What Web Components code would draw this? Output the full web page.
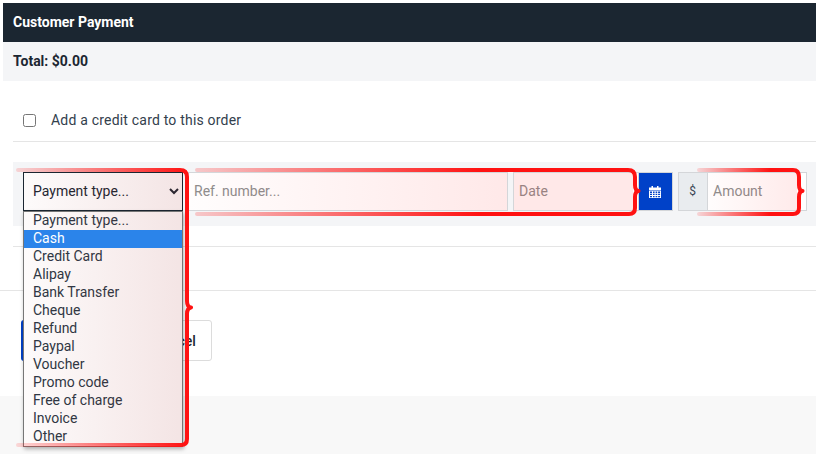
<!DOCTYPE html>
<html>
<head>
<meta charset="utf-8">
<style>
    html, body { margin: 0; background: #fff; }
    body { width: 816px; height: 454px; overflow: hidden; position: relative; font: 14px Roboto, sans-serif; color: #1b2631; }
</style>
</head>
<body>
<payment-page></payment-page>
<annotation-marks></annotation-marks>

<script>
class PaymentHeader extends HTMLElement {
    constructor() {
        super();
        this.attachShadow({ mode: 'open' });
        this.shadowRoot.innerHTML = `
            <style>
                :host { display: block; margin: 3px 0 0 3px; }
                .title, .total {
                    height: 37px;
                    padding: 0 0 2px 10px;
                    display: flex;
                    align-items: center;
                    font-size: 14px;
                    font-weight: 700;
                }
                .title { background: #1b2631; color: #fff; }
                .total { background: #f4f5f7; color: #1b2631; }
            </style>
            <div class="title">Customer Payment</div>
            <div class="total">Total: $0.00</div>
        `;
    }
}

class CardOption extends HTMLElement {
    constructor() {
        super();
        this.attachShadow({ mode: 'open' });
        this.shadowRoot.innerHTML = `
            <style>
                :host {
                    display: flex;
                    align-items: center;
                    height: 42px;
                    margin-left: 13px;
                    padding: 18px 0 0 10px;
                    border-bottom: 1px solid #e5e5e5;
                }
                input { width: 13px; height: 13px; margin: 0 15px 0 0; }
                label { font-size: 14px; letter-spacing: .2px; color: #33404d; }
            </style>
            <input type="checkbox" id="c"><label for="c"><slot></slot></label>
        `;
    }
}

class PaymentTypeList extends HTMLElement {
    constructor() {
        super();
        this.attachShadow({ mode: 'open' });
        const items = ['Payment type...', 'Cash', 'Credit Card', 'Alipay', 'Bank Transfer', 'Cheque', 'Refund',
            'Paypal', 'Voucher', 'Promo code', 'Free of charge', 'Invoice', 'Other'];
        this.shadowRoot.innerHTML = `
            <style>
                :host {
                    display: block;
                    position: absolute;
                    left: 10px;
                    top: 49px;
                    width: 160px;
                    box-sizing: border-box;
                    border: 1px solid #767676;
                    background: #fff;
                    box-shadow: 1px 2px 4px rgba(0,0,0,.3);
                    z-index: 5;
                }
                div { height: 18px; line-height: 16px; padding-left: 9px; font-size: 14px; color: #2b3744; }
                div.on { background: #2b84ea; color: #fff; }
            </style>
            ${items.map(i => `<div class="${i === 'Cash' ? 'on' : ''}">${i}</div>`).join('')}
        `;
    }
}

class PaymentRow extends HTMLElement {
    constructor() {
        super();
        this.attachShadow({ mode: 'open' });
        this.shadowRoot.innerHTML = `
            <style>
                :host {
                    display: flex;
                    position: relative;
                    margin: 20px 0 0 13px;
                    padding: 10px 9px 15px 10px;
                    height: 39px;
                    background: #f4f5f7;
                    font-size: 14px;
                }
                select {
                    width: 160px;
                    height: 39px;
                    box-sizing: border-box;
                    padding: 0 0 2px 5px;
                    margin-right: 5px;
                    border: 1px solid #1b2631;
                    border-radius: 0;
                    background: #fff;
                    color: #1b2631;
                    font: 14px Roboto, sans-serif;
                    outline: none;
                }
                input {
                    height: 39px;
                    box-sizing: border-box;
                    border: 1px solid #d4d6d9;
                    border-radius: 0;
                    background: #fff;
                    padding: 0 5px 2px;
                    font: 14px Roboto, sans-serif;
                    outline: none;
                }
                input::placeholder { color: #8d8d8d; opacity: 1; }
                .ref { width: 320px; margin-right: 5px; }
                .date { width: 125px; border-right: 0; }
                .cal {
                    width: 35px;
                    height: 39px;
                    padding-right: 2px;
                    display: flex;
                    align-items: center;
                    justify-content: center;
                    background: #0041c8;
                    border: 1px solid #d4d6d9;
                    box-sizing: border-box;
                    margin-right: 5px;
                }
                .cur {
                    width: 29px;
                    height: 39px;
                    box-sizing: border-box;
                    padding: 0 1px 2px 0;
                    display: flex;
                    align-items: center;
                    justify-content: center;
                    background: #e9ecef;
                    border: 1px solid #d4d6d9;
                    border-right: 0;
                    font-size: 12px;
                    color: #3a4654;
                }
                .amt { flex: 1; min-width: 0; }
            </style>
            <select><option>Payment type...</option></select>
            <input class="ref" placeholder="Ref. number...">
            <input class="date" placeholder="Date">
            <div class="cal">
                <svg width="12" height="12" viewBox="0 0 12 12" fill="#fff">
                    <rect x="2.5" y="0" width="1.5" height="2.5"/><rect x="8" y="0" width="1.5" height="2.5"/>
                    <path d="M0 1.5h12V4H0z"/>
                    <path fill-rule="evenodd" d="M0 4.500h12V12H0zM1 5.500v1.400h2V5.500zM4 5.500v1.400h1.600V5.500zM6.600 5.500v1.400h1.600V5.500zM9.100 5.500v1.400h2V5.500zM1 7.800v1.300h2V7.800zM4 7.800v1.300h1.600V7.800zM6.600 7.800v1.300h1.600V7.800zM9.100 7.800v1.300h2V7.800zM1 10v1.200h2V10zM4 10v1.200h1.600V10zM6.600 10v1.200h1.600V10zM9.100 10v1.200h2V10z"/>
                </svg>
            </div>
            <div class="cur">$</div>
            <input class="amt" placeholder="Amount">
            <payment-type-list></payment-type-list>
        `;
    }
}

class FormActions extends HTMLElement {
    constructor() {
        super();
        this.attachShadow({ mode: 'open' });
        this.shadowRoot.innerHTML = `
            <style>
                :host { display: block; }
                .rule1 { height: 1px; background: #e5e5e5; margin: 20px 0 0 13px; }
                .rule2 { height: 1px; background: #e5e5e5; margin-top: 43px; }
                .btns { display: flex; gap: 12px; padding: 29px 0 0 21px; height: 41px; }
                .btn { height: 41px; box-sizing: border-box; border-radius: 3px; font: 500 14px Roboto, sans-serif; display: flex; align-items: center; justify-content: center; }
                .save { width: 104px; background: #0041c8; }
                .cancel { width: 75px; border: 1px solid #dcdcdc; color: #1b2631; background: #fff; }
                .foot { height: 58px; margin-top: 35px; background: #f8f8f8; }
            </style>
            <div class="rule1"></div>
            <div class="rule2"></div>
            <div class="btns">
                <div class="btn save"></div>
                <div class="btn cancel">Cancel</div>
            </div>
            <div class="foot"></div>
        `;
    }
}

class PaymentPage extends HTMLElement {
    constructor() {
        super();
        this.attachShadow({ mode: 'open' });
        this.shadowRoot.innerHTML = `
            <style>
                :host { display: block; }
            </style>
            <payment-header></payment-header>
            <card-option>Add a credit card to this order</card-option>
            <payment-row></payment-row>
            <form-actions></form-actions>
        `;
    }
}

// red hand drawn marks that sit over the form
class AnnotationMarks extends HTMLElement {
    constructor() {
        super();
        this.attachShadow({ mode: 'open' });
        this.shadowRoot.innerHTML = `
            <style>
                :host { display: block; position: absolute; left: 0; top: 0; width: 816px; height: 454px; pointer-events: none; z-index: 10; }
                svg { display: block; }
            </style>
            <svg width="816" height="454" viewBox="0 0 816 454" fill="none">
                <defs>
                    <linearGradient id="s1" gradientUnits="userSpaceOnUse" x1="17" y1="0" x2="187" y2="0">
                        <stop offset="0" stop-color="#ff1212" stop-opacity=".15"/><stop offset="1" stop-color="#ff1212"/>
                    </linearGradient>
                    <linearGradient id="f1" gradientUnits="userSpaceOnUse" x1="23" y1="0" x2="183" y2="0">
                        <stop offset="0" stop-color="#a83232" stop-opacity=".02"/><stop offset="1" stop-color="#a83232" stop-opacity=".13"/>
                    </linearGradient>
                    <linearGradient id="s2" gradientUnits="userSpaceOnUse" x1="195" y1="0" x2="480" y2="0">
                        <stop offset="0" stop-color="#ff1212" stop-opacity=".2"/><stop offset="1" stop-color="#ff1212"/>
                    </linearGradient>
                    <linearGradient id="f2" gradientUnits="userSpaceOnUse" x1="190" y1="0" x2="510" y2="0">
                        <stop offset="0" stop-color="#ff3030" stop-opacity=".01"/><stop offset="1" stop-color="#ff3030" stop-opacity=".11"/>
                    </linearGradient>
                    <linearGradient id="s3" gradientUnits="userSpaceOnUse" x1="698" y1="0" x2="770" y2="0">
                        <stop offset="0" stop-color="#ff1212" stop-opacity=".15"/><stop offset="1" stop-color="#ff1212"/>
                    </linearGradient>
                    <linearGradient id="f3" gradientUnits="userSpaceOnUse" x1="707" y1="0" x2="797" y2="0">
                        <stop offset="0" stop-color="#ff3030" stop-opacity=".01"/><stop offset="1" stop-color="#ff3030" stop-opacity=".1"/>
                    </linearGradient>
                </defs>
                <rect x="24" y="173" width="158" height="37" fill="url(#f1)"/>
                <rect x="24" y="212" width="158" height="18" fill="url(#f1)"/>
                <rect x="24" y="248" width="158" height="197" fill="url(#f1)"/>
                <rect x="189" y="173" width="318" height="37" fill="url(#f2)"/>
                <rect x="514" y="173" width="119" height="37" fill="#ff3030" fill-opacity=".11"/>
                <rect x="708" y="173" width="89" height="37" fill="url(#f3)"/>
                <g stroke-width="4" stroke-linejoin="round" stroke-linecap="round">
                    <path stroke="url(#s1)" d="M18 170H180q7 0 7 7V301q0 6 4 6.500q-4 .5-4 6.500V439q0 6-6 6H18"/>
                    <path stroke="url(#s2)" d="M197 170H628q7 0 7 7V185q0 5.500 3.500 6q-3.500 .5-3.500 6v11q0 6-6 6H197"/>
                    <path stroke="url(#s3)" d="M699 170H793q6 0 6 7V185q0 5.500 3.500 6q-3.500 .5-3.500 6v11q0 6-6 6H699"/>
                </g>
            </svg>
        `;
    }
}

customElements.define('payment-header', PaymentHeader);
customElements.define('card-option', CardOption);
customElements.define('payment-type-list', PaymentTypeList);
customElements.define('payment-row', PaymentRow);
customElements.define('form-actions', FormActions);
customElements.define('payment-page', PaymentPage);
customElements.define('annotation-marks', AnnotationMarks);
</script>
</body>
</html>
